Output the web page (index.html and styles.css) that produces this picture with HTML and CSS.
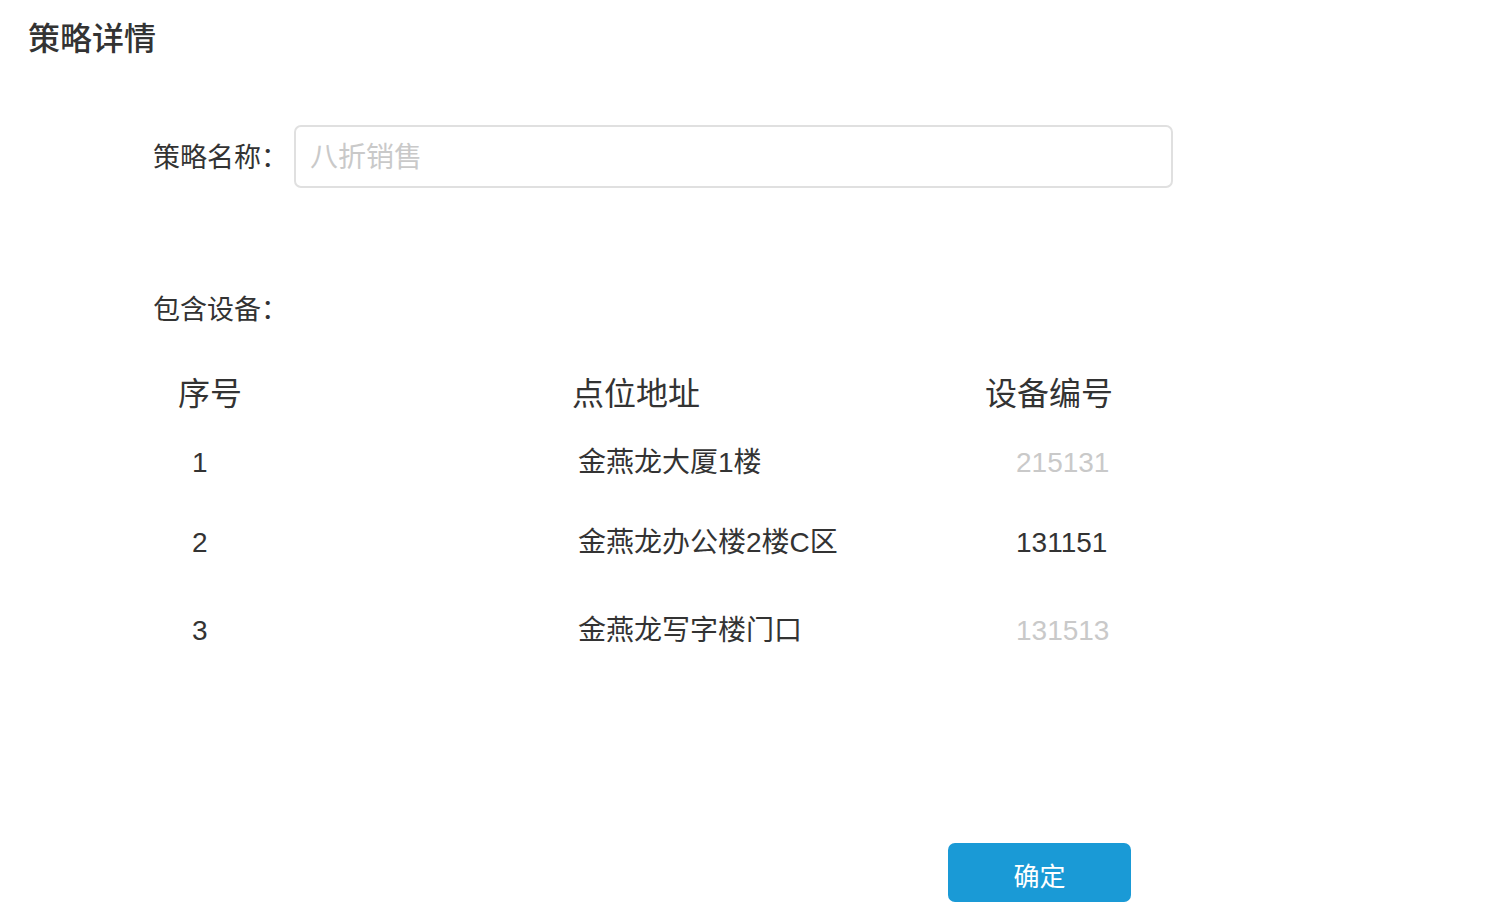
FILE: index.html
```html
<!DOCTYPE html>
<html lang="zh-CN">
<head>
<meta charset="utf-8">
<title>策略详情</title>
<link rel="stylesheet" href="styles.css">
</head>
<body>
<div class="page">
  <h1 class="title">策略详情</h1>
  <div class="form">
    <div class="field">
      <label class="label">策略名称：</label>
      <input class="input" type="text" placeholder="八折销售">
    </div>
    <div class="label section-label">包含设备：</div>
    <div class="table">
      <div class="row head">
        <div class="cell c1">序号</div>
        <div class="cell c2">点位地址</div>
        <div class="cell c3">设备编号</div>
      </div>
      <div class="row body r1">
        <div class="cell c1">1</div>
        <div class="cell c2">金燕龙大厦1楼</div>
        <div class="cell c3 muted">215131</div>
      </div>
      <div class="row body r2">
        <div class="cell c1">2</div>
        <div class="cell c2">金燕龙办公楼2楼C区</div>
        <div class="cell c3">131151</div>
      </div>
      <div class="row body r3">
        <div class="cell c1">3</div>
        <div class="cell c2">金燕龙写字楼门口</div>
        <div class="cell c3 muted">131513</div>
      </div>
    </div>
    <div class="footer">
      <button class="btn" type="button">确定</button>
    </div>
  </div>
</div>
</body>
</html>
```
FILE: styles.css
```css
html, body {
  margin: 0;
  padding: 0;
  background: #ffffff;
}
body {
  font-family: "Liberation Sans", "Noto Sans CJK SC", sans-serif;
  color: #333333;
}
.page {
  width: 1502px;
  height: 922px;
  overflow: hidden;
}
.title {
  margin: 0;
  padding: 19px 0 0 28px;
  font-size: 32px;
  line-height: 40px;
  font-weight: 500;
  color: #333333;
}
.form {
  padding-left: 153px;
}
.field {
  display: flex;
  align-items: center;
  margin-top: 66px;
}
.label {
  font-size: 27px;
  line-height: 40px;
  color: #333333;
}
.field .label {
  width: 141px;
  flex: none;
  padding-top: 3px;
}
.input {
  box-sizing: border-box;
  width: 879px;
  height: 63px;
  border: 2px solid #e0e0e0;
  border-radius: 7px;
  padding: 2px 14px 0;
  font-family: "Liberation Sans", "Noto Sans CJK SC", sans-serif;
  font-size: 28px;
  color: #333333;
  outline: none;
  background: #fff;
}
.input::placeholder {
  color: #c9c9c9;
}
.section-label {
  margin-top: 102px;
}
.table {
  margin-left: 25px;
  margin-top: 44px;
}
.row {
  display: grid;
  grid-template-columns: 394px 413px 200px;
  line-height: 40px;
}
.head {
  font-size: 32px;
}
.body {
  font-size: 28px;
}
.r1 { margin-top: 29px; }
.r2 { margin-top: 40px; }
.r3 { margin-top: 48px; }
.body .c1 { padding-left: 14px; }
.body .c2 { padding-left: 6px; }
.body .c3 { padding-left: 31px; }
.muted {
  color: #c9c9c9;
}
.footer {
  margin-top: 192px;
  padding-left: 795px;
}
.btn {
  width: 183px;
  height: 59px;
  border: none;
  border-radius: 7px;
  background: #1a9ad6;
  color: #ffffff;
  font-family: "Liberation Sans", "Noto Sans CJK SC", sans-serif;
  font-size: 26px;
  padding: 3px 0 0;
  cursor: pointer;
}
```
